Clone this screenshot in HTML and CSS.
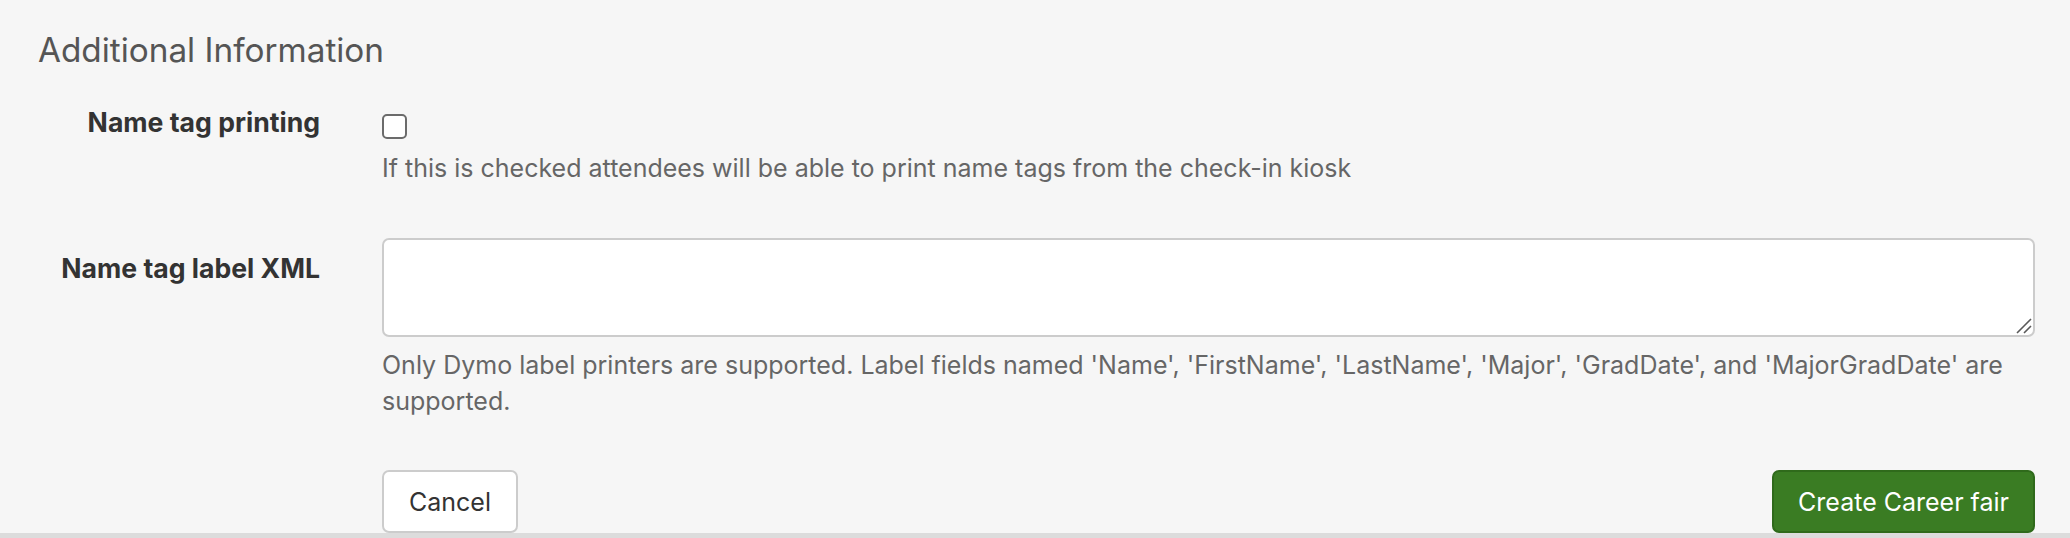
FILE: index.html
```html
<!DOCTYPE html>
<html lang="en">
<head>
<meta charset="utf-8">
<title>Additional Information</title>
<link rel="stylesheet" href="styles.css">
</head>
<body>
<div class="page">
  <h2 class="section-title">Additional Information</h2>
  <div class="form-row row-checkbox">
    <label class="field-label" for="nametag">Name tag printing</label>
    <div class="field-control">
      <input type="checkbox" id="nametag" class="checkbox">
      <p class="help">If this is checked attendees will be able to print name tags from the check-in kiosk</p>
    </div>
  </div>
  <div class="form-row row-textarea">
    <label class="field-label label-textarea" for="xml">Name tag label XML</label>
    <div class="field-control">
      <div class="textarea-wrap">
        <textarea id="xml" class="textarea"></textarea>
        <svg class="resize-grip" width="16" height="16" viewBox="0 0 16 16"><path d="M1 15 L15 1 M8 15 L15 8" stroke="#5a5a5a" stroke-width="1.6" fill="none"/></svg>
      </div>
      <p class="help help-two">Only Dymo label printers are supported. Label fields named 'Name', 'FirstName', 'LastName', 'Major', 'GradDate', and 'MajorGradDate' are supported.</p>
    </div>
  </div>
  <div class="form-row row-actions">
    <div></div>
    <div class="actions">
      <button class="btn btn-default" type="button">Cancel</button>
      <button class="btn btn-primary" type="submit">Create Career fair</button>
    </div>
  </div>
</div>
<div class="bottom-edge"></div>
</body>
</html>
```
FILE: styles.css
```css
html, body {
  margin: 0;
  padding: 0;
  background: #f6f6f6;
  font-family: "Inter", "Liberation Sans", sans-serif;
  height: 538px;
  overflow: hidden;
}
.page {
  padding: 30px 35px 0 38px;
  height: 533px;
  box-sizing: border-box;
}
.section-title {
  margin: 0 0 34px 0;
  font-size: 33.3px;
  line-height: 40px;
  font-weight: 400;
  color: #555555;
}
.form-row {
  display: grid;
  grid-template-columns: 282px 1fr;
  column-gap: 62px;
}
.field-label {
  text-align: right;
  font-size: 26.6px;
  line-height: 36px;
  font-weight: 700;
  color: #333333;
}
.label-textarea {
  padding-top: 12px;
}
.field-control {
  display: flex;
  flex-direction: column;
  align-items: flex-start;
}
.checkbox {
  appearance: none;
  -webkit-appearance: none;
  margin: 10px 0 0 0;
  width: 25px;
  height: 25px;
  border: 2px solid #6b6b6b;
  border-radius: 5px;
  background: #ffffff;
  box-sizing: border-box;
}
.help {
  margin: 11px 0 0 0;
  font-size: 25px;
  line-height: 36px;
  color: #666666;
}
.row-textarea {
  margin-top: 52px;
}
.textarea-wrap {
  position: relative;
  width: 100%;
}
.textarea {
  display: block;
  width: 100%;
  height: 99px;
  box-sizing: border-box;
  border: 2px solid #cccccc;
  border-radius: 7px;
  background: #ffffff;
  resize: none;
  font-family: inherit;
  font-size: 24px;
}
.resize-grip {
  position: absolute;
  right: 3px;
  bottom: 3px;
}
.help-two {
  margin-top: 10px;
}
.row-actions {
  margin-top: 51px;
}
.actions {
  display: flex;
  justify-content: space-between;
}
.btn {
  height: 63px;
  box-sizing: border-box;
  border-radius: 7px;
  font-family: inherit;
  font-size: 25px;
  padding: 0 24px;
  cursor: pointer;
}
.btn-default {
  background: #ffffff;
  border: 2px solid #cccccc;
  color: #333333;
  padding: 0 25px;
}
.btn-primary {
  background: #3a7c23;
  border: 2px solid #2f6a1b;
  color: #ffffff;
}
.bottom-edge {
  height: 5px;
  background: #dcdcdc;
}
```
